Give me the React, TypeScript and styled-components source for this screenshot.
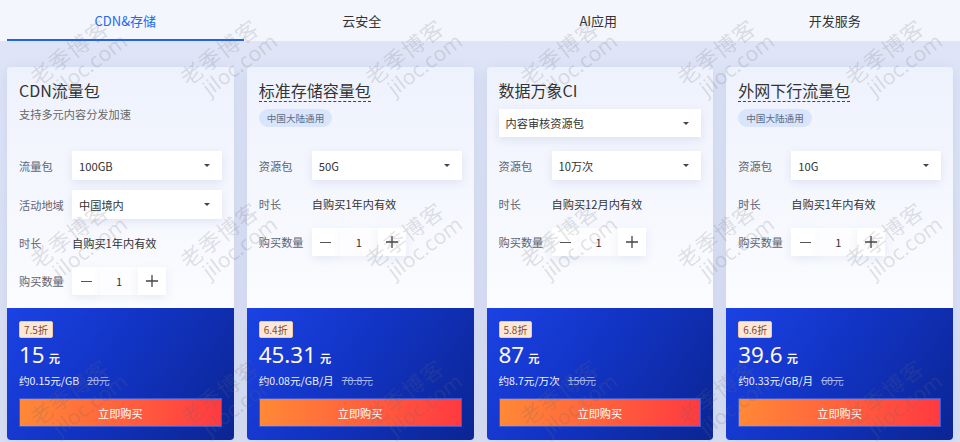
import React, { useState } from 'react'
import styled, { createGlobalStyle } from 'styled-components'

const GlobalStyle = createGlobalStyle`
  html, body {
    margin: 0;
    padding: 0;
    height: 442px;
    overflow: hidden;
    background: #dde3f6;
    font-family: "Noto Sans CJK SC", "Noto Sans", sans-serif;
  }
  * { box-sizing: border-box; }
`

const Page = styled.div`
  position: relative;
  width: 960px;
  height: 442px;
  overflow: hidden;
  background: linear-gradient(180deg, #dfe5f7 0%, #d9e0f4 100%);
`

const TabBar = styled.div`
  display: flex;
  height: 41px;
  padding: 0 7px;
  background: #f3f6fd;
`

const Tab = styled.div<{ active?: boolean }>`
  flex: 1;
  display: flex;
  align-items: center;
  justify-content: center;
  font-size: 13px;
  color: ${({ active }) => (active ? '#2468f2' : '#333')};
  border-bottom: 2px solid ${({ active }) => (active ? '#1f63ec' : 'transparent')};
  padding-top: 2px;
  cursor: pointer;
`

const CardGrid = styled.div`
  display: grid;
  grid-template-columns: repeat(4, 1fr);
  gap: 13px;
  padding: 26px 7px 0;
`

const Card = styled.div`
  display: flex;
  flex-direction: column;
  height: 373px;
  border-radius: 4px;
  overflow: hidden;
  box-shadow: 0 4px 14px rgba(60, 80, 160, 0.12);
`

const Top = styled.div`
  flex: 1;
  padding: 13px 12px 0;
  background: linear-gradient(180deg, #eef2fd 0%, #f6f8fe 60%, #fbfcff 100%);
`

const Header = styled.div`
  height: 71px;
  display: flex;
  flex-direction: column;
  align-items: flex-start;
`

const Title = styled.div<{ dashed?: boolean }>`
  font-size: 16px;
  line-height: 21px;
  color: #333;
  border-bottom: 1px ${({ dashed }) => (dashed ? 'dashed #444' : 'solid transparent')};
`

const Sub = styled.div`
  margin-top: 4px;
  font-size: 11.2px;
  line-height: 16px;
  color: #666;
`

const Pill = styled.span`
  margin-top: 7px;
  height: 18px;
  padding: 0 8px;
  border-radius: 9px;
  background: #d9e5fc;
  color: #5d6c86;
  font-size: 9.6px;
  line-height: 18px;
`

const Rows = styled.div`
  display: flex;
  flex-direction: column;
  gap: 10px;
`

const Row = styled.div`
  display: grid;
  grid-template-columns: 53px 1fr;
  align-items: center;
  min-height: 28px;
`

const Label = styled.span`
  font-size: 11.2px;
  color: #5f6472;
  white-space: nowrap;
`

const Value = styled.span`
  font-size: 11.2px;
  color: #333;
`

const Select = styled.div<{ full?: boolean }>`
  display: flex;
  align-items: center;
  height: ${({ full }) => (full ? 28 : 29)}px;
  margin-top: ${({ full }) => (full ? 7 : 0)}px;
  width: 100%;
  padding: 0 7px;
  background: #fff;
  box-shadow: 0 3px 10px rgba(70, 90, 160, 0.12);
  font-size: 11.2px;
  color: #333;
  cursor: pointer;
`

const Caret = styled.span`
  margin-left: auto;
  margin-right: 5px;
  width: 0;
  height: 0;
  border-left: 3.5px solid transparent;
  border-right: 3.5px solid transparent;
  border-top: 3.5px solid #444;
`

const Stepper = styled.div`
  display: flex;
  height: 28px;
`

const StepBtn = styled.button`
  width: 28px;
  height: 28px;
  border: 0;
  padding: 0;
  background: #fff;
  display: flex;
  align-items: center;
  justify-content: center;
  box-shadow: 0 3px 10px rgba(70, 90, 160, 0.1);
  cursor: pointer;
`

const Count = styled.div`
  width: 38px;
  display: flex;
  align-items: center;
  justify-content: center;
  font-size: 11.2px;
  color: #333;
  background: #fdfdff;
  box-shadow: 0 3px 10px rgba(70, 90, 160, 0.06);
`

const Bottom = styled.div`
  height: 132px;
  padding: 13px 12px;
  display: flex;
  flex-direction: column;
  align-items: flex-start;
  background: linear-gradient(125deg, #1b42e4 0%, #1234c4 45%, #0b2593 100%);
`

const Discount = styled.span`
  height: 17px;
  padding: 0 4px;
  border: 1px solid #f3c7a8;
  border-radius: 2px;
  background: #ffe7d5;
  color: #7a4a35;
  font-size: 10px;
  line-height: 15px;
`

const Price = styled.div`
  margin-top: 2px;
  height: 30px;
  display: flex;
  align-items: baseline;
  color: #fff6ec;
  font-family: "Noto Sans", "Noto Sans CJK SC", sans-serif;
  font-size: 22.4px;
  line-height: 30px;
  b {
    margin-left: 4px;
    font-family: "Noto Sans CJK SC", sans-serif;
    font-size: 11.2px;
    font-weight: 700;
  }
`

const Unit = styled.div`
  margin-top: 3px;
  font-size: 10.6px;
  line-height: 16px;
  color: #f0f3ff;
  s {
    margin-left: 8px;
    color: #a7b6ea;
  }
`

const BuyButton = styled.button`
  margin-top: 9px;
  width: 100%;
  height: 29px;
  border: 1px solid #3d59d6;
  background: linear-gradient(90deg, #ff8936 0%, #ff5a3e 60%, #ff3a40 100%);
  color: #fff;
  font-family: "Noto Sans CJK SC", sans-serif;
  font-size: 11.2px;
  cursor: pointer;
`

const Overlay = styled.div`
  position: absolute;
  inset: 0;
  pointer-events: none;
  overflow: hidden;
`

const Mark = styled.div`
  position: absolute;
  transform: translate(-50%, -50%) rotate(-37deg);
  color: rgba(105, 105, 115, 0.19);
  white-space: nowrap;
  text-align: center;
  div:first-child {
    font-size: 22px;
    line-height: 24px;
    letter-spacing: 1px;
  }
  div:last-child {
    font-family: "Noto Sans", sans-serif;
    font-size: 21px;
    line-height: 22px;
    padding-left: 18px;
  }
`

type Field =
  | { kind: 'select'; label: string; value: string }
  | { kind: 'text'; label: string; value: string }
  | { kind: 'count'; label: string }

type Product = {
  title: string
  dashed?: boolean
  sub?: string
  pill?: string
  topSelect?: string
  fields: Field[]
  discount: string
  price: string
  unit: string
  old: string
}

const products: Product[] = [
  {
    title: 'CDN流量包',
    sub: '支持多元内容分发加速',
    fields: [
      { kind: 'select', label: '流量包', value: '100GB' },
      { kind: 'select', label: '活动地域', value: '中国境内' },
      { kind: 'text', label: '时长', value: '自购买1年内有效' },
      { kind: 'count', label: '购买数量' },
    ],
    discount: '7.5折',
    price: '15',
    unit: '约0.15元/GB',
    old: '20元',
  },
  {
    title: '标准存储容量包',
    dashed: true,
    pill: '中国大陆通用',
    fields: [
      { kind: 'select', label: '资源包', value: '50G' },
      { kind: 'text', label: '时长', value: '自购买1年内有效' },
      { kind: 'count', label: '购买数量' },
    ],
    discount: '6.4折',
    price: '45.31',
    unit: '约0.08元/GB/月',
    old: '70.8元',
  },
  {
    title: '数据万象CI',
    topSelect: '内容审核资源包',
    fields: [
      { kind: 'select', label: '资源包', value: '10万次' },
      { kind: 'text', label: '时长', value: '自购买12月内有效' },
      { kind: 'count', label: '购买数量' },
    ],
    discount: '5.8折',
    price: '87',
    unit: '约8.7元/万次',
    old: '150元',
  },
  {
    title: '外网下行流量包',
    dashed: true,
    pill: '中国大陆通用',
    fields: [
      { kind: 'select', label: '资源包', value: '10G' },
      { kind: 'text', label: '时长', value: '自购买1年内有效' },
      { kind: 'count', label: '购买数量' },
    ],
    discount: '6.6折',
    price: '39.6',
    unit: '约0.33元/GB/月',
    old: '60元',
  },
]

const tabs = ['CDN&存储', '云安全', 'AI应用', '开发服务']

// watermark centres, read off the screenshot
const marks: [number, number][] = []
;[60, 243, 400].forEach(y => {
  ;[75, 225, 410, 565, 722, 890].forEach(x => marks.push([x, y]))
})

function Minus() {
  return (
    <svg width="11" height="11" viewBox="0 0 11 11">
      <path d="M0 5.5h11" stroke="#555" strokeWidth="1.1" />
    </svg>
  )
}

function Plus() {
  return (
    <svg width="12" height="12" viewBox="0 0 12 12">
      <path d="M0 6h12M6 0v12" stroke="#444" strokeWidth="1.3" />
    </svg>
  )
}

function Counter() {
  const [n, setN] = useState(1)
  return (
    <Stepper>
      <StepBtn onClick={() => setN(Math.max(1, n - 1))}><Minus /></StepBtn>
      <Count>{n}</Count>
      <StepBtn onClick={() => setN(n + 1)}><Plus /></StepBtn>
    </Stepper>
  )
}

function ProductCard({ p }: { p: Product }) {
  return (
    <Card>
      <Top>
        <Header>
          <Title dashed={p.dashed}>{p.title}</Title>
          {p.sub && <Sub>{p.sub}</Sub>}
          {p.pill && <Pill>{p.pill}</Pill>}
          {p.topSelect && (
            <Select full>
              {p.topSelect}
              <Caret />
            </Select>
          )}
        </Header>
        <Rows>
          {p.fields.map(f => (
            <Row key={f.label}>
              <Label>{f.label}</Label>
              {f.kind === 'select' && (
                <Select>
                  {f.value}
                  <Caret />
                </Select>
              )}
              {f.kind === 'text' && <Value>{f.value}</Value>}
              {f.kind === 'count' && <Counter />}
            </Row>
          ))}
        </Rows>
      </Top>
      <Bottom>
        <Discount>{p.discount}</Discount>
        <Price>
          {p.price}
          <b>元</b>
        </Price>
        <Unit>
          {p.unit}
          <s>{p.old}</s>
        </Unit>
        <BuyButton>立即购买</BuyButton>
      </Bottom>
    </Card>
  )
}

export default function App() {
  const [active, setActive] = useState(0)
  return (
    <Page>
      <GlobalStyle />
      <TabBar>
        {tabs.map((t, i) => (
          <Tab key={t} active={i === active} onClick={() => setActive(i)}>
            {t}
          </Tab>
        ))}
      </TabBar>
      <CardGrid>
        {products.map(p => (
          <ProductCard key={p.title} p={p} />
        ))}
      </CardGrid>
      <Overlay>
        {marks.map(([x, y]) => (
          <Mark key={`${x}-${y}`} style={{ left: x, top: y }}>
            <div>老季博客</div>
            <div>jiloc.com</div>
          </Mark>
        ))}
      </Overlay>
    </Page>
  )
}
